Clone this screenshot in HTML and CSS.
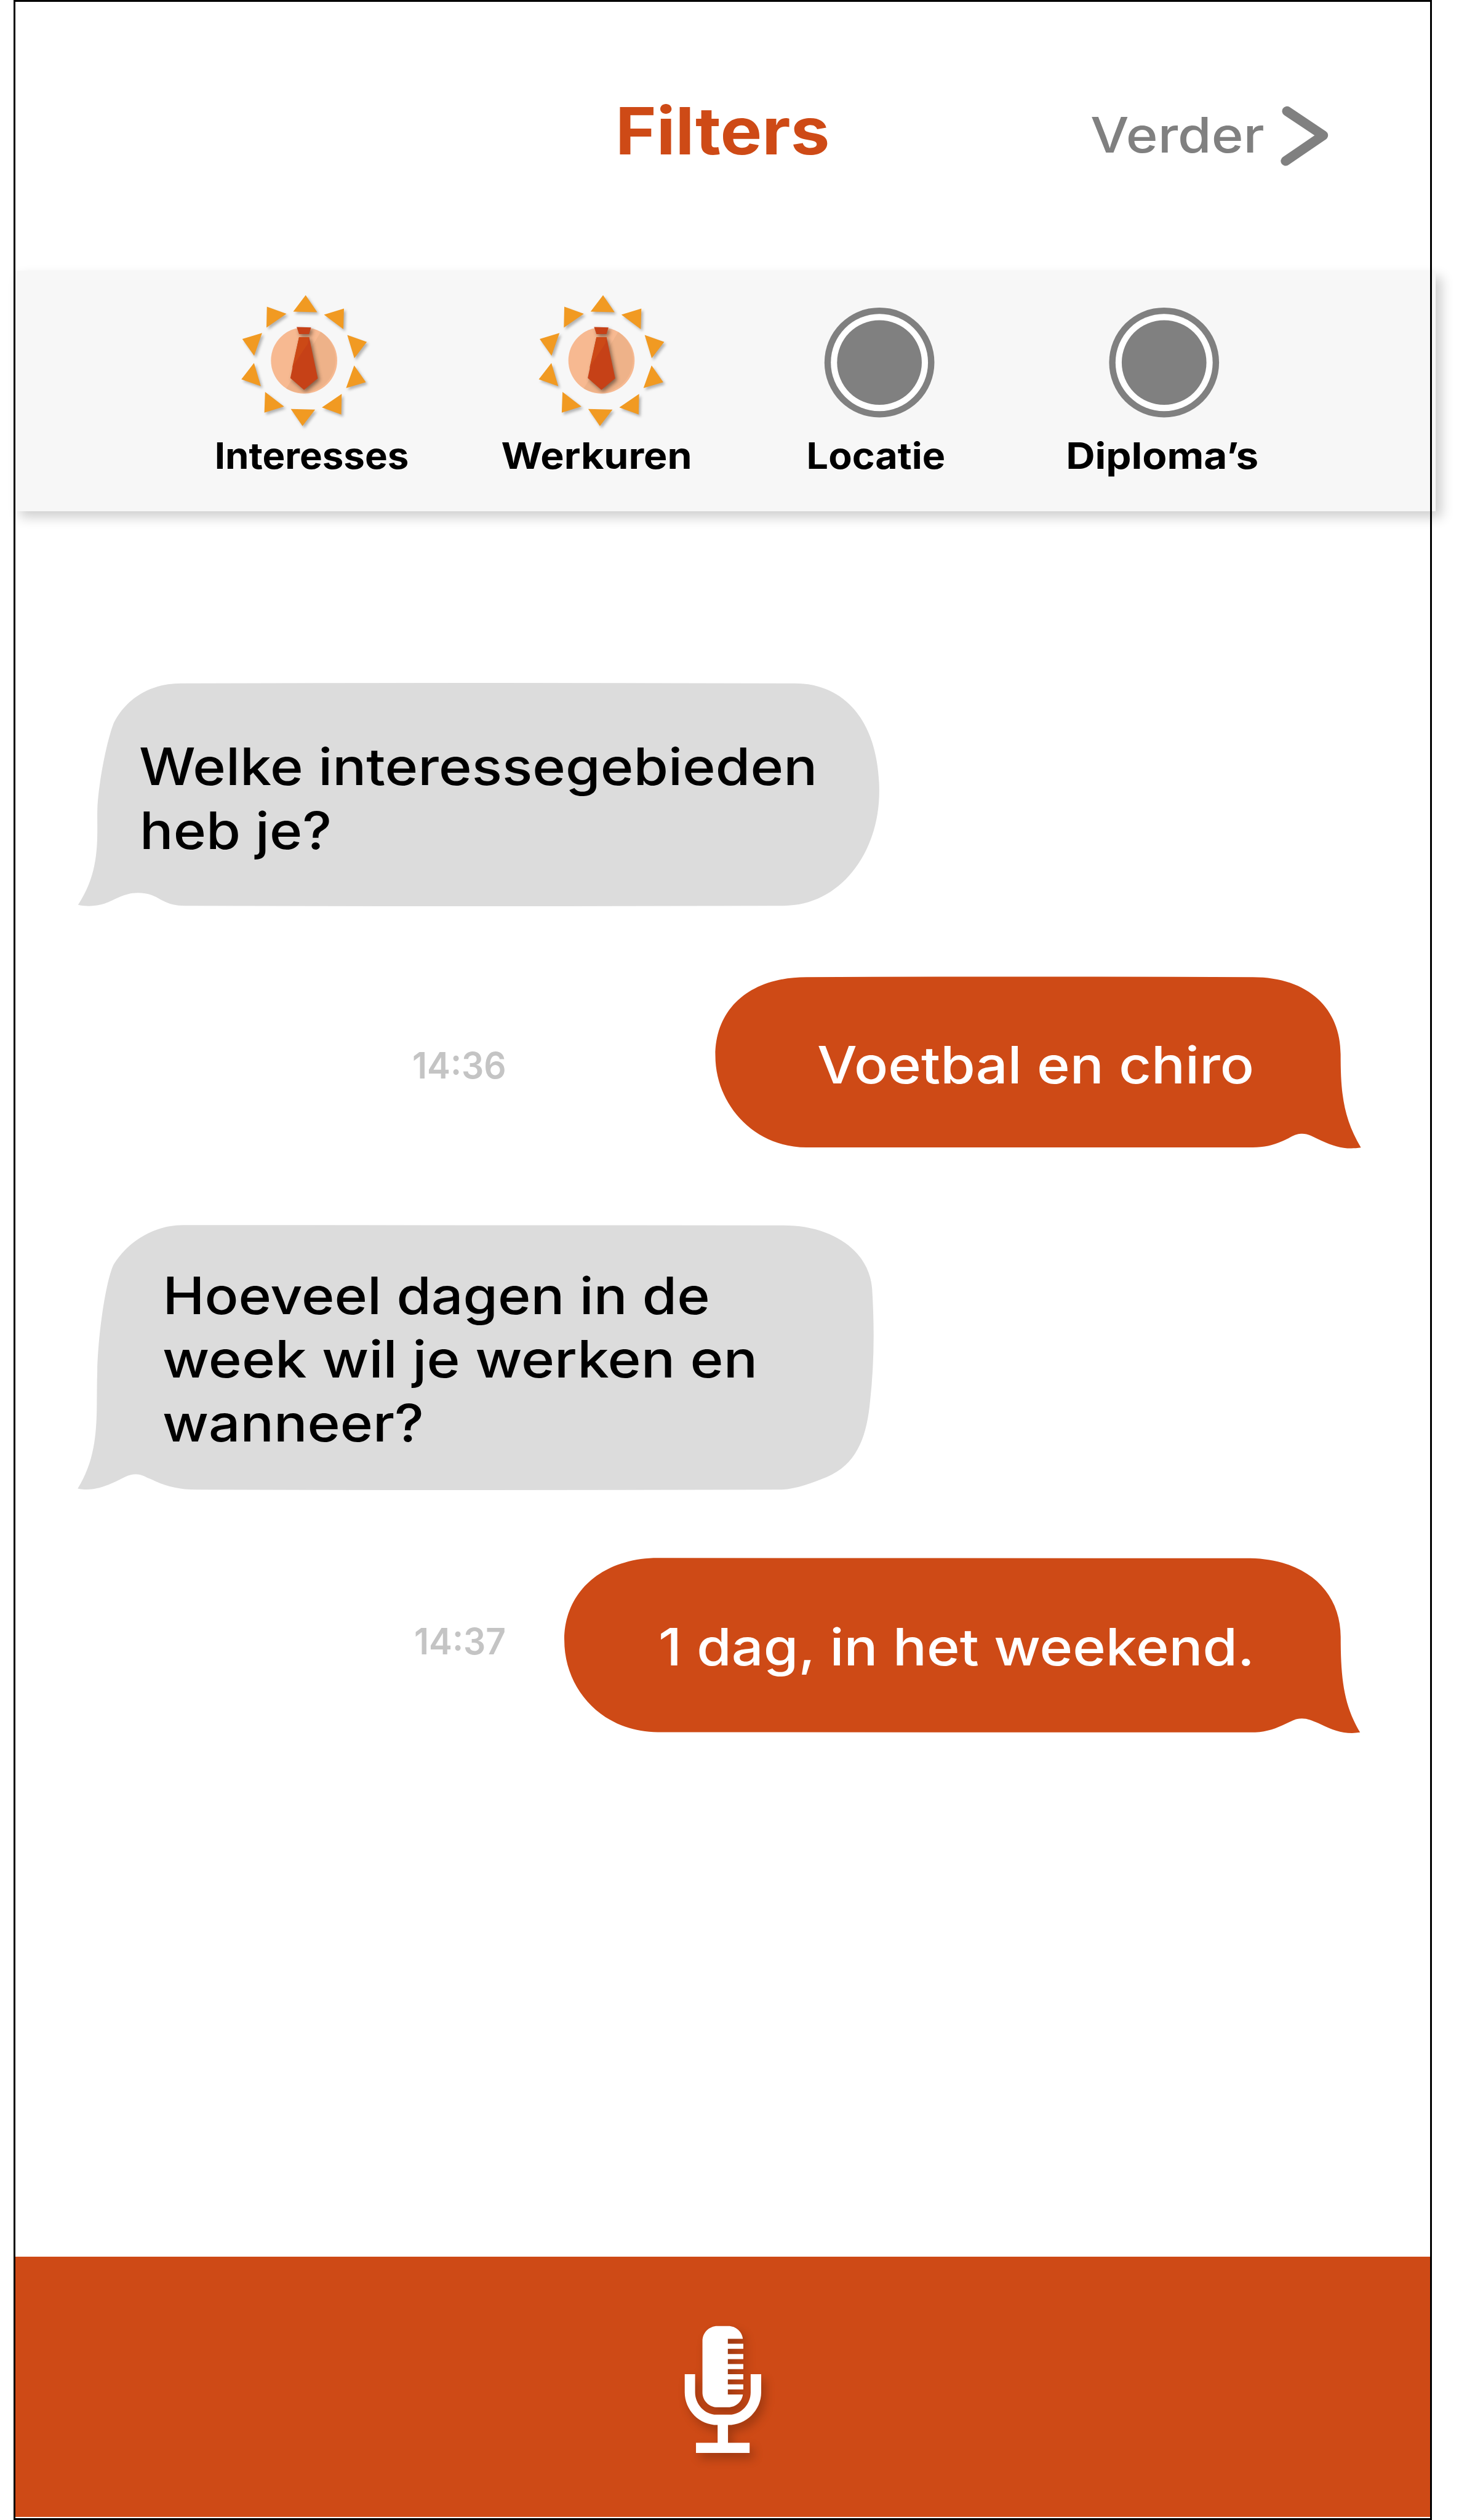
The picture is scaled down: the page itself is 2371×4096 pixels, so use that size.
FILE: index.html
```html
<!DOCTYPE html>
<html lang="nl">
<head>
<meta charset="utf-8">
<title>Filters</title>
<link rel="stylesheet" href="styles.css">
</head>
<body>
<svg class="defs" aria-hidden="true">
  <symbol id="sun" viewBox="-450 -450 900 900" overflow="visible">
    <g transform="translate(-523 -511)">
      <g class="rays">
        <path d="M534 76L611 190L451 186ZM276 153L406 200L273 292ZM789 165L785 303L656 206ZM244 328L191 480L112 368ZM811 342L941 388L858 496ZM190 528L236 683L106 637ZM857 544L935 656L803 695ZM264 721L390 818L259 859ZM774 734L771 871L642 824ZM435 834L597 838L513 948Z"/>
      </g>
      <circle class="sun-face" cx="523.5" cy="511.5" r="220.5"/>
      <path class="sun-shade" d="M635 321A221 221 0 0 1 405 698Z"/>
      <g class="tie">
        <path d="M474 288L570 291L557 335H490ZM490 356H557L615 630L523 707L432 628Z"/>
      </g>
      <path class="tie-light" d="M490 356H557L548 400L455 540L443 565Z"/>
    </g>
  </symbol>
  <symbol id="ring" viewBox="-150 -150 300 300" overflow="visible">
    <circle class="ring-outer" r="122"/>
    <circle class="ring-gap" r="107.8"/>
    <circle class="ring-outer" r="94"/>
  </symbol>
</svg>

<main class="screen">
  <header class="header">
    <h1 class="title">Filters</h1>
    <a class="next">
      <span class="next-label">Verder</span>
      <svg class="chevron" viewBox="2840 234 110 134"><path d="M2855.5 245.8L2936 299.5L2852.5 356.5"/></svg>
    </a>
  </header>

  <nav class="filters">
    <div class="filter filter-interests">
      <svg class="filter-icon"><use href="#sun"/></svg>
      <span class="filter-label">Interesses</span>
    </div>
    <div class="filter filter-hours">
      <svg class="filter-icon"><use href="#sun"/></svg>
      <span class="filter-label">Werkuren</span>
    </div>
    <div class="filter filter-location">
      <svg class="filter-icon"><use href="#ring"/></svg>
      <span class="filter-label">Locatie</span>
    </div>
    <div class="filter filter-degrees">
      <svg class="filter-icon"><use href="#ring"/></svg>
      <span class="filter-label">Diploma’s</span>
    </div>
  </nav>

  <section class="chat">
    <div class="row">
      <div class="bubble bubble-in question-1">
        <svg class="shape" viewBox="174 1516 1776 496" preserveAspectRatio="none"><path d="M172.500 2008.500C196 2013.500 214 2011 232 2005.500C254 1998 274 1982 305 1982C337 1982 350 1995 362 2000C375 2007 390 2010.400 408 2010.400Q1084 2012.500 1738 2010.400C1862 2010.400 1950 1895 1950 1756C1950 1610 1880 1517 1762 1517Q1119 1515 400 1517C330 1517 278 1553 252 1604C238 1638 219 1730 215.500 1789C213 1850 226 1928 172.500 2008.500Z"/></svg>
        <p class="line line-welke">Welke interessegebieden</p>
        <p class="line line-heb">heb je?</p>
      </div>
    </div>

    <div class="row row-out answer-row-1">
      <time class="time">14:36</time>
      <div class="bubble bubble-out answer-1">
        <svg class="shape" viewBox="1587 2167 1433 382" preserveAspectRatio="none"><path d="M1587.700 2343C1587.700 2235 1668 2168.700 1790 2168.700Q2282 2166.500 2780 2168.700C2905 2168.700 2975 2240 2975 2340C2975 2430 2982 2482 3020 2547C2985 2552 2963 2545 2933 2531.700C2912 2522 2903 2516 2890 2516C2872 2516 2868 2523 2845 2533C2825 2542 2805 2546.500 2780 2546.500H1790C1672 2546.500 1587.700 2450 1587.700 2343Z"/></svg>
        <p class="line line-voetbal">Voetbal en chiro</p>
      </div>
    </div>

    <div class="row question-row-2">
      <div class="bubble bubble-in question-2">
        <svg class="shape" viewBox="173 2718.500 1765.500 588.500" preserveAspectRatio="none"><path d="M172 3303.500C200 3309 222 3303 247.400 3292C272 3281 283 3271.600 301 3271.600C315 3271.600 322 3278 334.700 3282.800C364 3297 394 3306 435 3306Q1070 3307.500 1726.800 3306C1764 3306 1800 3291 1834 3277.800C1900 3250 1922 3190 1929.700 3112.800C1939 3030 1940 2950 1934.500 2860C1928 2775 1845 2719.400 1738.600 2719.400L405.500 2718.800C340 2718.800 282 2757 252 2806C236 2838 218 2950 215.500 3042C212 3135 224 3220 172 3303.500Z"/></svg>
        <p class="line line-hoeveel">Hoeveel dagen in de</p>
        <p class="line line-week">week wil je werken en</p>
        <p class="line line-wanneer">wanneer?</p>
      </div>
    </div>

    <div class="row row-out answer-row-2">
      <time class="time">14:37</time>
      <div class="bubble bubble-out answer-2">
        <svg class="shape" viewBox="1252.500 3457.500 1766 390" preserveAspectRatio="none"><path d="M1252.600 3640C1252.600 3530 1340 3458 1460 3458L2768 3458.500C2898 3458.500 2975 3532 2975 3633C2975 3725 2982 3785 3018 3845C2985 3850 2960 3841 2931 3827C2908 3817 2900 3814.300 2889 3814.300C2872 3814.300 2868 3820 2846 3829C2824 3839 2804 3845 2774 3845L1460 3844.500C1340 3844.500 1252.600 3752 1252.600 3640Z"/></svg>
        <p class="line line-dag">1 dag, in het weekend.</p>
      </div>
    </div>
  </section>

  <footer class="footer">
    <svg class="mic" viewBox="200 180 520 850">
      <path d="M425 183H497C548 183 588 220 594 268H494V301H597V335H494V369H597V403H494V436H597V470H494V504H597V538H494V571H597V605H494V639H594C588 687 548 724 497 724H425C369 724 325 680 325 624V283C325 227 369 183 425 183Z"/>
      <path d="M207 504H276V624C276 700 338 773 418 773H505C585 773 646 700 646 624V504H716V624C716 742 618 842 495 842V960H639V1028H282V960H426V842C303 842 207 742 207 624Z"/>
    </svg>
  </footer>
</main>
</body>
</html>
```
FILE: styles.css
```css
* {
  box-sizing: border-box;
}

body {
  margin: 0;
  background: #fff;
  font-family: Inter, "Liberation Sans", sans-serif;
  font-weight: 500;
  overflow: hidden;
}

h1,
p {
  margin: 0;
}

.defs {
  display: block;
  width: 0;
  height: 0;
}

.screen {
  position: relative;
  display: flex;
  flex-direction: column;
  width: 2305px;
  height: 4096px;
  margin-left: 22px;
}

/* outline of the phone, drawn over the bars */
.screen::after {
  content: "";
  position: absolute;
  inset: 0;
  border: 3px solid #000;
  pointer-events: none;
}

/* header */
.header {
  display: flex;
  align-items: flex-start;
  flex: none;
  height: 440px;
  padding: 148px 0 0 977.6px;
}

.title {
  flex: none;
  width: 360px;
  font-size: 106.3px;
  line-height: 130px;
  font-weight: 700;
  color: #ce4a16;
  transform: scaleX(1.07);
  transform-origin: left;
}

.next {
  display: flex;
  align-items: flex-start;
  margin: 22.5px 0 0 412.9px;
  color: #808080;
}

.next-label {
  width: 307.7px;
  font-size: 79.4px;
  line-height: 96px;
  transform: scaleX(1.112);
  transform-origin: left;
}

.chevron {
  flex: none;
  width: 80.6px;
  height: 98.1px;
  margin-top: 1px;
  fill: none;
  stroke: currentColor;
  stroke-width: 21.5;
  stroke-linecap: round;
  stroke-linejoin: round;
}

/* filter bar */
.filters {
  display: flex;
  flex: none;
  width: 2311.4px;
  height: 391px;
  padding: 36px 0 0 264.5px;
  background: #f7f7f7;
  box-shadow: 10px 10px 18px rgba(0, 0, 0, 0.19);
}

.filter {
  display: flex;
  flex-direction: column;
  align-items: center;
  flex: none;
  width: 440px;
}

.filter-hours {
  margin-left: 22.9px;
}

.filter-location {
  margin-left: 14.2px;
}

.filter-degrees {
  margin-left: 25.1px;
}

.filter-icon {
  flex: none;
  width: 219.7px;
  height: 219.7px;
  overflow: visible;
}

.filter-interests .filter-icon {
  transform: translateX(-12.8px);
}

.filter-hours .filter-icon {
  transform: translateX(7.5px);
}

.filter-location .filter-icon {
  transform: translate(5.3px, 3.4px);
}

.filter-degrees .filter-icon {
  transform: translate(2.9px, 3.4px);
}

.filter-label {
  margin-top: 9px;
  font-size: 59.3px;
  line-height: 72px;
  font-weight: 700;
  color: #000;
}

.filter-interests .filter-label {
  transform: scaleX(1.042);
}

.filter-hours .filter-label {
  transform: scaleX(1.087);
}

.filter-location .filter-label {
  transform: scaleX(1.06);
}

.filter-degrees .filter-label {
  transform: scaleX(1.105);
}

.rays {
  fill: #f19a22;
  filter: drop-shadow(12px 14px 9px rgba(0, 0, 0, 0.28));
}

.sun-face {
  fill: #f7b991;
}

.sun-shade {
  fill: #eeb289;
}

.tie {
  fill: #c64117;
  filter: drop-shadow(12px 14px 14px rgba(0, 0, 0, 0.45));
}

.tie-light {
  fill: #cc4916;
}

.ring-outer {
  fill: #808080;
}

.ring-gap {
  fill: #fff;
}

/* conversation */
.chat {
  flex: 1;
  padding-top: 279.4px;
}

.row {
  display: flex;
  align-items: flex-start;
  padding-left: 105.5px;
}

.row-out {
  padding: 0 115px 0 0;
}

.bubble {
  position: relative;
  font-size: 83.2px;
  line-height: 103.5px;
  white-space: nowrap;
}

.bubble-in {
  color: #000;
  fill: #dcdcdc;
}

.bubble-out {
  margin-left: auto;
  color: #fff;
  fill: #ce4a16;
}

.shape {
  position: absolute;
  inset: 0;
  z-index: -1;
  width: 100%;
  height: 100%;
  overflow: visible;
}

.line {
  transform-origin: left;
}

.time {
  font-size: 59.4px;
  line-height: 72px;
  font-weight: 600;
  color: #c4c4c4;
  transform: scaleX(0.958);
  transform-origin: left;
}

.question-1 {
  width: 1300.9px;
  height: 363.3px;
  padding: 83.8px 0 0 98.8px;
}

.answer-row-1 {
  margin-top: 113.6px;
}

.answer-row-1 .time {
  margin: 108.2px 0 0 648.4px;
}

.answer-1 {
  width: 1049.6px;
  height: 279.8px;
  padding: 92.2px 0 0 165.1px;
}

.question-row-2 {
  margin-top: 124.1px;
  padding-left: 104.7px;
}

.question-2 {
  width: 1293.2px;
  height: 431.1px;
  padding: 62.6px 0 0 137px;
}

.answer-row-2 {
  margin-top: 110.2px;
  padding-right: 116px;
}

.answer-row-2 .time {
  margin: 98.8px 0 0 651.1px;
}

.answer-2 {
  width: 1293.6px;
  height: 285.7px;
  padding: 92.8px 0 0 152.6px;
}

.line-welke {
  transform: scaleX(1.1);
}

.line-heb {
  padding-left: 1px;
  transform: scaleX(1.09);
}

.line-voetbal {
  transform: scaleX(1.1);
}

.line-hoeveel {
  padding-left: 0.5px;
  transform: scaleX(1.096);
}

.line-week {
  transform: scaleX(1.107);
}

.line-wanneer {
  transform: scaleX(1.089);
}

.line-dag {
  transform: scaleX(1.099);
}

/* voice input bar */
.footer {
  display: flex;
  justify-content: center;
  align-items: flex-start;
  flex: none;
  height: 422.6px;
  margin-bottom: 5.4px;
  padding-top: 111.5px;
  background: #ce4a16;
}

.mic {
  width: 127px;
  height: 207.5px;
  overflow: visible;
  fill: #fff;
  filter: drop-shadow(6px 9px 8px rgba(0, 0, 0, 0.24));
}
```
